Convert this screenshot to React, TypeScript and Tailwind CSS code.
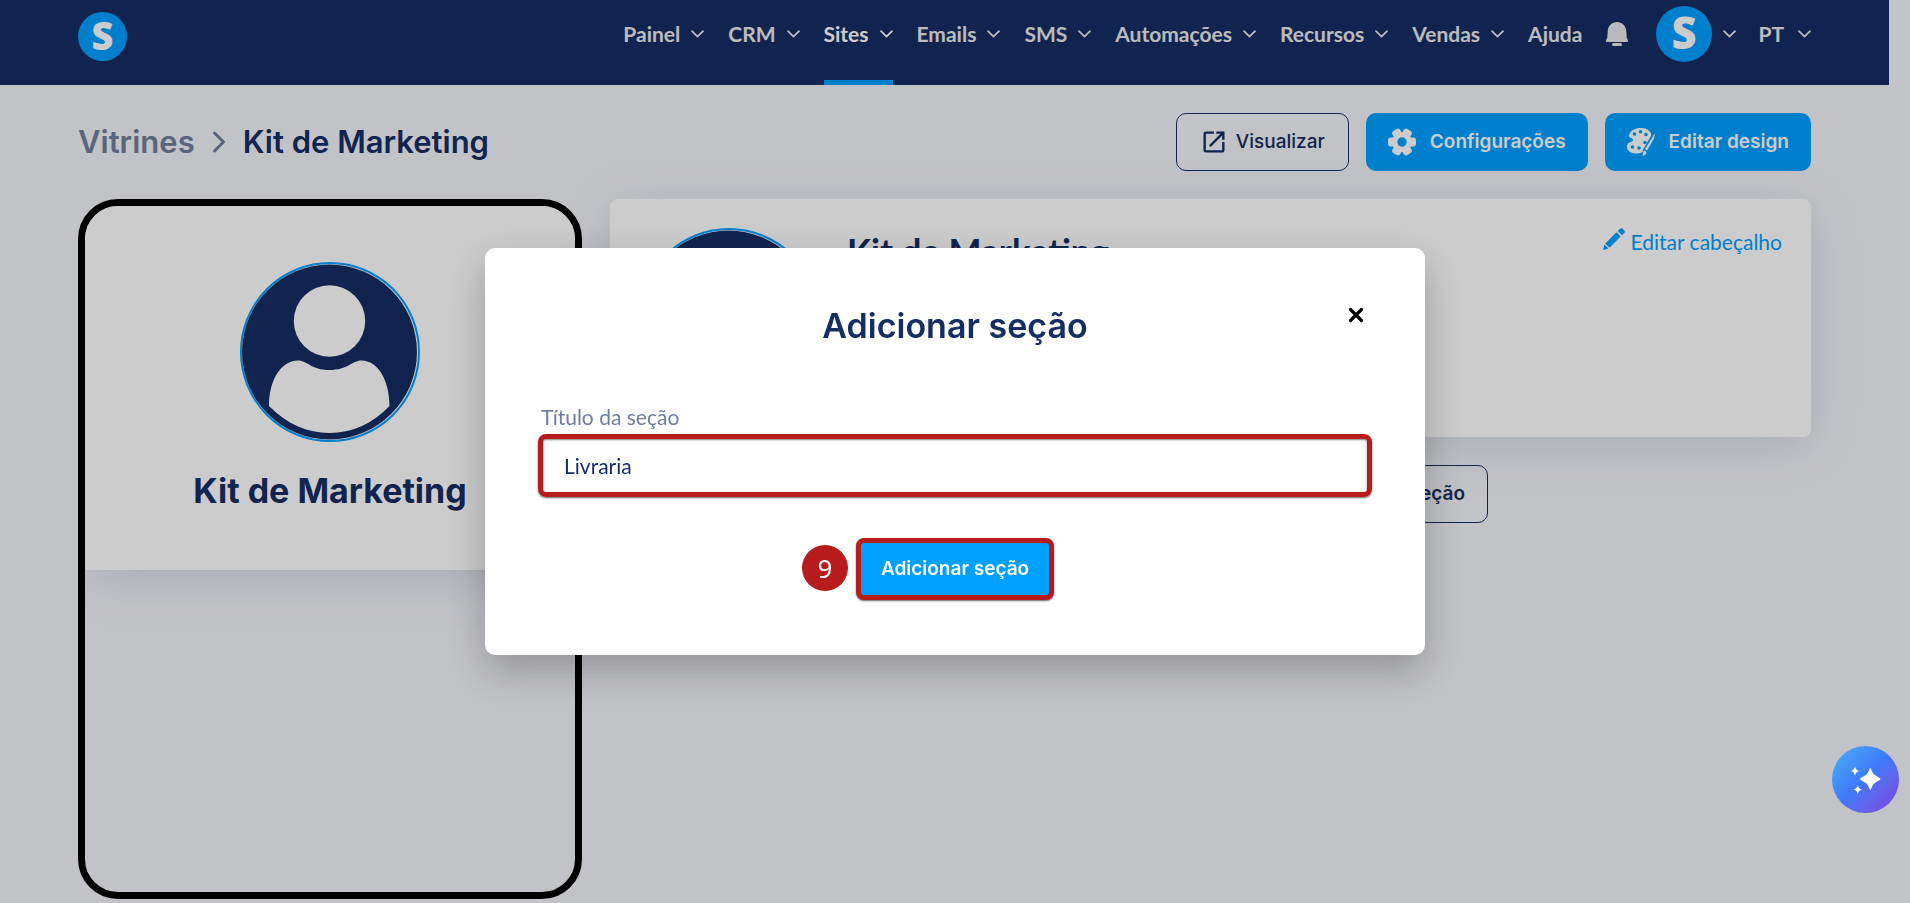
import React, { useState } from 'react';
import { ChevronRight, X } from 'lucide-react';
import { MdOpenInNew } from 'react-icons/md';

const NAV_ITEMS = ['Painel', 'CRM', 'Sites', 'Emails', 'SMS', 'Automações', 'Recursos', 'Vendas'];

function BrandMark({ className }: { className: string }) {
  return (
    <svg viewBox="0 0 49 49" className={className} aria-label="Logo">
      <circle cx="24.5" cy="24.5" r="24.5" fill="#00a0ff" />
      <text
        x="24.5"
        y="38"
        textAnchor="middle"
        fill="#fff"
        className="font-['Open_Sans',sans-serif] text-[38px] font-extrabold"
      >
        S
      </text>
    </svg>
  );
}

function Caret() {
  return (
    <svg viewBox="0 0 13 8" className="h-2 w-[13px]" fill="none" stroke="currentColor" strokeWidth="1.700">
      <path d="M1 1.200 6.500 6.600 12 1.200" strokeLinecap="round" strokeLinejoin="round" />
    </svg>
  );
}

function BellIcon() {
  return (
    <svg viewBox="0 0 22 24" className="h-6 w-[22px]" fill="currentColor">
      <path d="M11 0c5 0 8.800 3.700 9.200 8.500l.5 6.500c.1 1 .3 1.500.8 2.300.3.500.5 1 .5 1.500 0 .8-.5 1.200-1.200 1.200H1.200C.5 20 0 19.600 0 18.800c0-.5.2-1 .5-1.500.5-.8.7-1.300.8-2.300l.5-6.500C2.200 3.700 6 0 11 0z" />
      <rect x="6" y="21" width="10" height="3" rx="1.500" />
    </svg>
  );
}

function GearIcon() {
  return (
    <svg viewBox="0 0 28 28" className="h-7 w-7">
      <g fill="currentColor">
        <circle cx="14" cy="14" r="10" />
        <rect x="0" y="9.500" width="28" height="9" rx="3" />
        <rect x="0" y="9.500" width="28" height="9" rx="3" transform="rotate(60 14 14)" />
        <rect x="0" y="9.500" width="28" height="9" rx="3" transform="rotate(120 14 14)" />
      </g>
      <circle cx="14" cy="14" r="4.700" fill="#00a0ff" />
    </svg>
  );
}

function PaletteIcon() {
  return (
    <svg viewBox="0 0 28 28" className="h-7 w-7">
      <path
        d="M14 0c6 0 10.500 3.500 10.500 8 0 2-1 3.500-2.500 5.500l-5 9c-1.500 2-3.500 3-7 3-6 0-10-2.500-10-6.500 0-4.500 3-4.500 5-5.500 2-1.200 1-3-1-3.500C1.500 9 1.500 7.500 3 5c2-3.500 6-5 11-5z"
        fill="currentColor"
      />
      <g fill="#00a0ff">
        <circle cx="7.500" cy="6" r="1.800" />
        <circle cx="13.500" cy="3.800" r="1.800" />
        <circle cx="19" cy="6.500" r="1.800" />
        <circle cx="5.500" cy="19" r="1.800" />
        <circle cx="12" cy="20" r="1.800" />
        <circle cx="18" cy="14.500" r="1.800" />
      </g>
      <path d="M28 5 17 24" stroke="#00a0ff" strokeWidth="4" />
      <path d="M28 5 27 10.500 20 22.500 18 21.200z" fill="currentColor" />
      <path d="M17 22.500 19.500 24c0 2-1.500 3.500-4 4 .5-2 .3-3.500 1.500-5.500z" fill="currentColor" />
    </svg>
  );
}

function PencilIcon() {
  return (
    <svg viewBox="0 0 22 22" className="h-[22px] w-[22px]" fill="currentColor">
      <path d="M17 .8c.8-.8 1.800-.8 2.600 0l1.600 1.600c.8.800.8 1.800 0 2.600L19 7.200 14.800 3z" />
      <path d="M13.500 4.300 17.700 8.500 6.500 19.700 2.300 15.500z" />
      <path d="M1.500 16.500 5.500 20.500 0 22z" />
    </svg>
  );
}

function Avatar() {
  return (
    <svg viewBox="0 0 180 180" className="h-[180px] w-[180px]">
      <circle cx="90" cy="90" r="89" fill="#fff" stroke="#00a0ff" strokeWidth="2" />
      <circle cx="89.500" cy="90" r="87.500" fill="#152d63" />
      <circle cx="89.500" cy="59" r="35.700" fill="#fff" />
      <path
        d="M29 144c0-25 11-45 29-45.500 9-.2 13 9.500 31.500 9.500s23-9.700 32-9.500c18 .5 28 22 28 45.500-17 18-38 27-60 27s-43-9-60.500-27z"
        fill="#fff"
      />
    </svg>
  );
}

function Header() {
  return (
    <header className="mr-[21px] flex h-[85px] items-start justify-between bg-[#152d63] px-[78px] font-['Lato',sans-serif] text-[21px] font-bold text-[#e9eaec]">
      <a href="#" className="pt-3">
        <BrandMark className="h-[49px] w-[49px] overflow-visible" />
      </a>
      <nav className="flex h-full">
        {NAV_ITEMS.map((item) => (
          <a
            key={item}
            href="#"
            className={
              item === 'Sites'
                ? 'mr-6 flex items-center gap-[11px] border-b-5 border-[#00a0ff] pb-3 text-white'
                : 'mr-6 flex items-center gap-[11px] border-b-5 border-transparent pb-3'
            }
          >
            {item}
            <Caret />
          </a>
        ))}
        <a href="#" className="flex items-center pb-[17px]">
          Ajuda
        </a>
        <button className="ml-6 flex items-center pb-[17px]" aria-label="Notificações">
          <BellIcon />
        </button>
        <button className="ml-7 flex items-center gap-[11px] pb-[17px]" aria-label="Conta">
          <BrandMark className="h-14 w-14 overflow-visible" />
          <Caret />
        </button>
        <button className="ml-[22px] flex items-center gap-[14px] pb-[17px]">
          PT
          <Caret />
        </button>
      </nav>
    </header>
  );
}

function AddSectionModal() {
  const [title, setTitle] = useState('Livraria');

  return (
    <div className="fixed inset-0 flex items-center justify-center bg-black/20">
      <div
        role="dialog"
        aria-labelledby="modal-title"
        className="relative w-[940px] rounded-[10px] bg-white px-[53px] pt-[56px] pb-[55px] shadow-[0_16px_40px_rgba(0,0,0,0.25)]"
      >
        <h2 id="modal-title" className="text-center text-[34px] leading-[44px] font-semibold text-[#152d63]">
          Adicionar seção
        </h2>
        <button className="absolute top-14 right-[58px] text-black" aria-label="Fechar">
          <X className="h-[22px] w-[22px]" strokeWidth={3.5} />
        </button>
        <div className="mt-[56px] font-['Lato',sans-serif] text-[21px]">
          <label htmlFor="section-title" className="mb-1 block pl-[3px] leading-[26px] text-[#6f7f99]">
            Título da seção
          </label>
          <input
            id="section-title"
            value={title}
            onChange={(e) => setTitle(e.target.value)}
            className="block h-[63px] w-full rounded-lg border-5 border-[#b71c1c] px-[21px] text-[#152d63] shadow-[0_1px_2px_rgba(0,0,0,0.6),inset_0_1px_2px_rgba(0,0,0,0.5)] outline-none"
          />
        </div>
        <div className="mt-[41px] flex justify-center">
          <div className="relative">
            <span className="absolute top-[7px] right-full mr-2 flex h-[46px] w-[46px] items-center justify-center rounded-full bg-[#b71c1c] font-['Noto_Sans',sans-serif] text-[26px] text-white">
              9
            </span>
            <button className="h-[62px] rounded-lg border-5 border-[#b71c1c] bg-[#00a0ff] px-5 text-[19px] font-semibold text-white shadow-[0_1px_2px_rgba(0,0,0,0.6)]">
              Adicionar seção
            </button>
          </div>
        </div>
      </div>
    </div>
  );
}

export default function App() {
  return (
    <div className="min-h-screen bg-[#f3f4f9] font-['Inter',sans-serif] text-[#152d63]">
      <Header />

      <main className="mr-[21px] px-[78px] pt-7">
        <div className="flex h-[58px] items-center justify-between">
          <h1 className="flex items-center gap-[6px] text-[31px] font-semibold">
            <a href="#" className="text-[#6f7f99]">
              Vitrines
            </a>
            <ChevronRight className="h-9 w-9 text-[#6f7f99]" strokeWidth={2} />
            Kit de Marketing
          </h1>
          <div className="flex gap-[17px] text-[19px]">
            <button className="flex h-[58px] items-center gap-2 rounded-[10px] border border-[#152d63] px-[23px] font-medium">
              <MdOpenInNew className="h-7 w-7" />
              Visualizar
            </button>
            <button className="flex h-[58px] items-center gap-[14px] rounded-[10px] bg-[#00a0ff] px-[22px] font-semibold text-white">
              <GearIcon />
              Configurações
            </button>
            <button className="flex h-[58px] items-center gap-[14px] rounded-[10px] bg-[#00a0ff] px-[22px] font-semibold text-white">
              <PaletteIcon />
              Editar design
            </button>
          </div>
        </div>

        <div className="mt-7 flex gap-7">
          {/* Phone preview */}
          <section className="h-[700px] w-[504px] shrink-0 overflow-hidden rounded-[40px] border-[7px] border-black">
            <div className="flex flex-col items-center bg-white pt-14 pb-12 shadow-[0_8px_50px_rgba(21,60,70,0.15)]">
              <Avatar />
              <h2 className="mt-[18px] text-[34px] leading-[62px] font-bold">Kit de Marketing</h2>
            </div>
          </section>

          <div className="flex grow flex-col items-center gap-7">
            <section className="flex h-[238px] w-full items-start rounded-lg bg-white px-[29px] pt-[29px] shadow-[0_8px_50px_rgba(21,60,70,0.15)]">
              <Avatar />
              <h2 className="ml-7 font-['Lato',sans-serif] text-[35px] leading-[44px] font-bold">Kit de Marketing</h2>
              <a href="#" className="ml-auto flex gap-[6px] font-['Lato',sans-serif] text-[21px] leading-[28px] text-[#00a0ff]">
                <PencilIcon />
                Editar cabeçalho
              </a>
            </section>
            <div className="flex w-[555px] justify-end">
              <button className="h-[58px] rounded-[10px] border border-[#152d63] px-[22px] text-[19px] font-semibold">
                Adicionar seção
              </button>
            </div>
          </div>
        </div>
      </main>

      <AddSectionModal />

      <button
        className="fixed right-[11px] bottom-[90px] flex h-[67px] w-[67px] items-center justify-center rounded-full bg-linear-135 from-[#4bb0f5] via-[#3f78fa] to-[#7b3fd8] text-white"
        aria-label="Assistente"
      >
        <svg viewBox="0 0 32 32" className="h-8 w-8" fill="currentColor">
          <path d="M20.300 4c.6 0 2 4.500 3.300 6 1.300 1.500 6.900 4 6.900 5s-5.600 3.500-6.900 5c-1.300 1.500-2.700 6-3.300 6s-2-4.500-3.300-6c-1.300-1.500-7-4-7-5s5.700-3.500 7-5c1.300-1.500 2.700-6 3.300-6z" />
          <path d="M5 2.500c1 3 1.500 3.700 4.500 4.500C6.500 7.800 6 8.500 5 11.500 4 8.500 3.500 7.800.5 7 3.500 6.200 4 5.500 5 2.500z" />
          <path d="M7.800 21c1 3 1.500 3.800 4.500 4.600-3 .8-3.500 1.600-4.500 4.600-1-3-1.500-3.800-4.500-4.600 3-.8 3.500-1.600 4.500-4.600z" />
        </svg>
      </button>
    </div>
  );
}
